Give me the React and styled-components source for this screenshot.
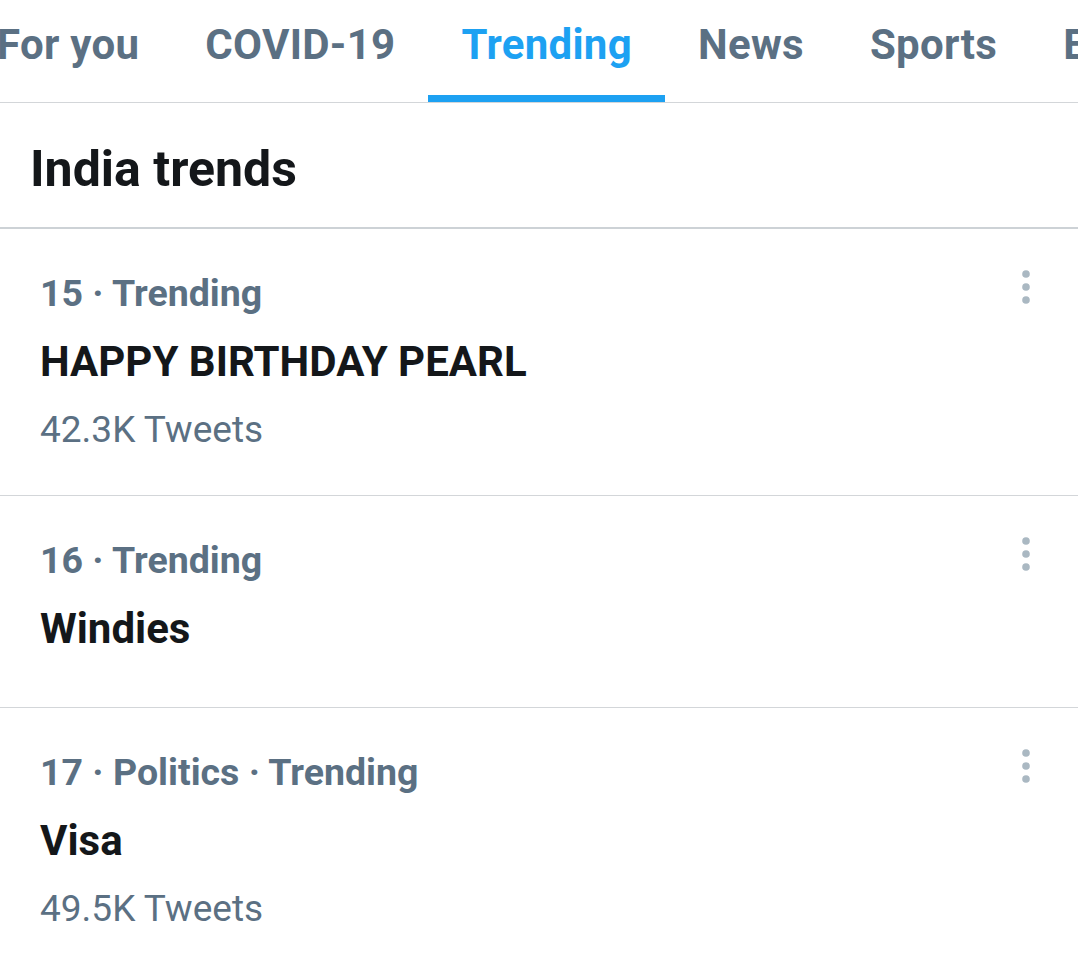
import styled, { createGlobalStyle } from "styled-components";

const GlobalStyle = createGlobalStyle`
  html, body {
    margin: 0;
    padding: 0;
    background: #ffffff;
  }
  body {
    font-family: Roboto, "Noto Sans", "Liberation Sans", sans-serif;
    overflow: hidden;
  }
`;

const TABS = ["For you", "COVID-19", "Trending", "News", "Sports", "Entertainment"];

const TRENDS = [
  { rank: 15, context: "Trending", title: "HAPPY BIRTHDAY PEARL", count: "42.3K Tweets" },
  { rank: 16, context: "Trending", title: "Windies" },
  { rank: 17, context: "Politics · Trending", title: "Visa", count: "49.5K Tweets" },
];

function MoreIcon() {
  return (
    <svg width="8" height="34" viewBox="0 0 8 34" aria-hidden="true">
      <circle cx="4" cy="4" r="3.8" fill="#AAB8C2" />
      <circle cx="4" cy="17" r="3.8" fill="#AAB8C2" />
      <circle cx="4" cy="30" r="3.8" fill="#AAB8C2" />
    </svg>
  );
}

function App() {
  return (
    <>
      <GlobalStyle />
      <Page>
        <TabBar>
          {TABS.map((tab) => (
            <Tab key={tab} $active={tab === "Trending"}>
              {tab}
            </Tab>
          ))}
        </TabBar>
        <Header>India trends</Header>
        <TrendList>
          {TRENDS.map((trend) => (
            <TrendRow key={trend.rank}>
              <TrendBody>
                <Meta>
                  {trend.rank} · {trend.context}
                </Meta>
                <Title>{trend.title}</Title>
                {trend.count && <Count>{trend.count}</Count>}
              </TrendBody>
              <MoreButton>
                <MoreIcon />
              </MoreButton>
            </TrendRow>
          ))}
        </TrendList>
      </Page>
    </>
  );
}

const Page = styled.div`
  width: 1078px;
  height: 953px;
  overflow: hidden;
  background: #ffffff;
`;

const TabBar = styled.nav`
  display: flex;
  height: 103px;
  box-sizing: border-box;
  border-bottom: 1px solid #d3d6d9;
  margin-left: -36px;
  white-space: nowrap;
`;

const Tab = styled.div`
  flex: none;
  box-sizing: border-box;
  height: 102px;
  padding: 20px 33px 0;
  font-size: 42px;
  line-height: 50px;
  font-weight: 700;
  letter-spacing: 0.3px;
  color: ${(p) => (p.$active ? "#1DA1F2" : "#5B7083")};
  border-bottom: 7px solid ${(p) => (p.$active ? "#1DA1F2" : "transparent")};
`;

const Header = styled.h2`
  margin: 0;
  padding: 36px 28px 28px 30px;
  font-size: 50px;
  line-height: 60px;
  font-weight: 700;
  color: #14171a;
  border-bottom: 2px solid #cdd2d6;
`;

const TrendList = styled.div`
  display: flex;
  flex-direction: column;
`;

const TrendRow = styled.div`
  display: flex;
  justify-content: space-between;
  align-items: flex-start;
  padding: 40px 48px 36px 40px;
  border-bottom: 1px solid #d3d6d9;
`;

const TrendBody = styled.div`
  display: flex;
  flex-direction: column;
`;

const Meta = styled.div`
  font-size: 37.5px;
  line-height: 48px;
  font-weight: 700;
  color: #5b7083;
`;

const Title = styled.div`
  margin-top: 3px;
  font-size: 42px;
  line-height: 84px;
  font-weight: 700;
  color: #14171a;
`;

const Count = styled.div`
  margin: 0 0 3px;
  font-size: 37px;
  line-height: 52px;
  font-weight: 400;
  color: #5b7083;
`;

const MoreButton = styled.div`
  margin-top: 1px;
  display: flex;
`;

export default App;
